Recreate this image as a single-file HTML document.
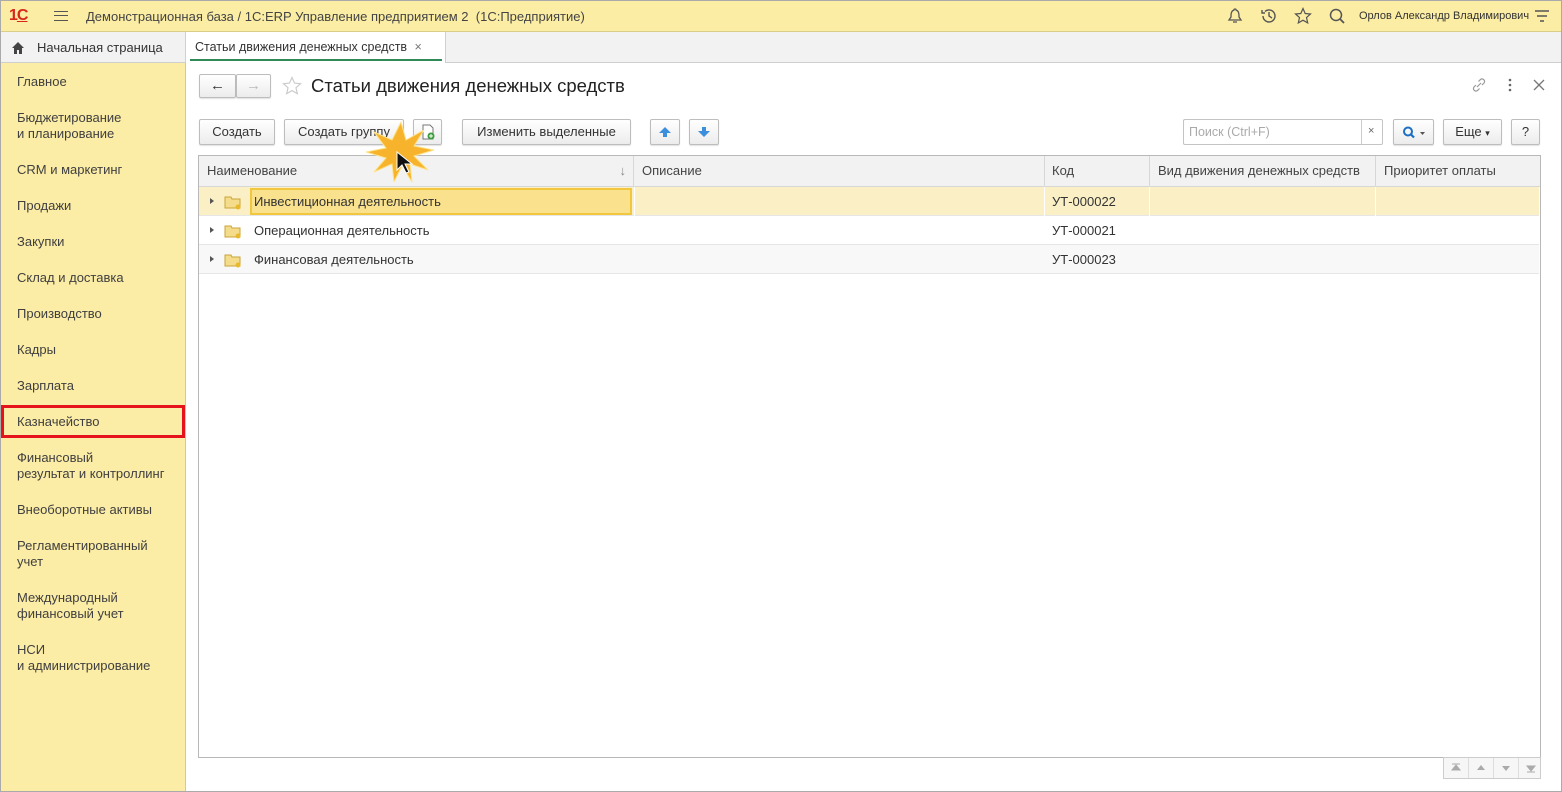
<!DOCTYPE html><html><head><meta charset="utf-8"><style>
*{box-sizing:border-box;margin:0;padding:0}
body{width:1562px;height:792px;overflow:hidden;font-family:"Liberation Sans",sans-serif;font-size:13px;color:#333;background:#fff;position:relative}
.a{position:absolute}
.btn{position:absolute;height:26px;border:1px solid #bdbdbd;border-radius:2px;background:linear-gradient(#fff,#ececec);box-shadow:0 1px 1px rgba(0,0,0,.12);text-align:center;line-height:24px;color:#333}
.side div{position:absolute;left:17px;line-height:16px;color:#404040}
.th{position:absolute;top:156px;height:30px;line-height:30px;padding-left:8px;border-right:1px solid #d7d7d7;color:#444}
.row{position:absolute;left:199px;width:1340px;height:29px;border-bottom:1px solid #e6e6e6;line-height:28px}
.tri{position:absolute;left:210px;width:0;height:0;border-left:4px solid #555;border-top:3.5px solid transparent;border-bottom:3.5px solid transparent}
</style></head><body>
<div class="a" style="left:0;top:0;width:1562px;height:32px;background:#fbeda4;border-bottom:1px solid #d9cd8a"></div>
<div class="a" style="left:9px;top:7px;color:#d7261c;font-weight:bold;font-size:16px;letter-spacing:-1px">1<span style="text-decoration:underline">С</span></div>
<div class="a" style="left:54px;top:11px;width:14px;height:10px;border-top:1.5px solid #555;border-bottom:1.5px solid #555"><div style="margin-top:3px;border-top:1.5px solid #555"></div></div>
<div class="a" style="left:86px;top:9px;color:#444">Демонстрационная база / 1С:ERP Управление предприятием 2&nbsp; (1С:Предприятие)</div>
<svg class="a" style="left:1226px;top:7px" width="18" height="18"><path d="M9 2a1 1 0 0 1 1 1c3 1 3 4 3 7l2 3H3l2-3c0-3 0-6 3-7a1 1 0 0 1 1-1zM7 15h4" fill="none" stroke="#555" stroke-width="1.3"/></svg>
<svg class="a" style="left:1260px;top:7px" width="18" height="18"><path d="M3 9a6 6 0 1 0 2-4.5M2 3v3h3M9 5v4l3 2" fill="none" stroke="#555" stroke-width="1.4"/></svg>
<svg class="a" style="left:1294px;top:7px" width="18" height="18"><path d="M9 1.5l2.2 5 5.3.5-4 3.6 1.2 5.3L9 13.2 4.3 15.9l1.2-5.3-4-3.6 5.3-.5z" fill="none" stroke="#555" stroke-width="1.2"/></svg>
<svg class="a" style="left:1329px;top:8px" width="17" height="17"><circle cx="7" cy="7" r="5.5" fill="none" stroke="#555" stroke-width="1.5"/><path d="M11 11l4 4" stroke="#555" stroke-width="1.8"/></svg>
<div class="a" style="left:1359px;top:10px;font-size:11px;color:#333">Орлов Александр Владимирович</div>
<svg class="a" style="left:1534px;top:9px" width="16" height="14"><path d="M1 2h14M3 7h10M6 12h4" stroke="#555" stroke-width="1.5"/></svg>
<div class="a" style="left:0;top:32px;width:1562px;height:31px;background:#f2f2f2;border-bottom:1px solid #cfcfcf"></div>
<svg class="a" style="left:11px;top:41px" width="14" height="13"><path d="M7 1L1 7h2v6h3V9h2v4h3V7h2z" fill="#444"/></svg>
<div class="a" style="left:37px;top:40px;color:#333">Начальная страница</div>
<div class="a" style="left:185px;top:32px;width:1px;height:31px;background:#d0d0d0"></div>
<div class="a" style="left:186px;top:32px;width:260px;height:31px;background:#fff;border-right:1px solid #d0d0d0"></div>
<div class="a" style="left:195px;top:40px;font-size:12.5px;color:#333">Статьи движения денежных средств <span style="color:#777;margin-left:4px">×</span></div>
<div class="a" style="left:190px;top:59px;width:252px;height:2px;background:#2e8b57"></div>
<div class="a" style="left:0;top:63px;width:186px;height:729px;background:#fbeca6;border-right:1px solid #d6ca8c"></div>
<div class="side">
<div style="top:74px">Главное</div>
<div style="top:110px">Бюджетирование<br>и планирование</div>
<div style="top:162px">CRM и маркетинг</div>
<div style="top:198px">Продажи</div>
<div style="top:234px">Закупки</div>
<div style="top:270px">Склад и доставка</div>
<div style="top:306px">Производство</div>
<div style="top:342px">Кадры</div>
<div style="top:378px">Зарплата</div>
<div style="top:414px">Казначейство</div>
<div style="top:450px">Финансовый<br>результат и контроллинг</div>
<div style="top:502px">Внеоборотные активы</div>
<div style="top:538px">Регламентированный<br>учет</div>
<div style="top:590px">Международный<br>финансовый учет</div>
<div style="top:642px">НСИ<br>и администрирование</div>
</div>
<div class="a" style="left:1px;top:405px;width:184px;height:33px;border:3px solid #e5131b"></div>
<div class="a" style="left:0;top:0;width:1562px;height:792px;border:1px solid #aaa;pointer-events:none"></div>
<div class="btn" style="left:199px;top:74px;width:37px;height:24px;line-height:22px;font-size:15px">←</div>
<div class="btn" style="left:236px;top:74px;width:35px;height:24px;line-height:22px;font-size:15px;color:#bbb">→</div>
<svg class="a" style="left:282px;top:76px" width="20" height="20"><path d="M10 1.5l2.5 5.6 6 .6-4.5 4 1.3 6L10 14.6 4.7 17.7l1.3-6-4.5-4 6-.6z" fill="none" stroke="#ccc" stroke-width="1.2"/></svg>
<div class="a" style="left:311px;top:75px;font-size:18.5px;color:#222">Статьи движения денежных средств</div>
<svg class="a" style="left:1471px;top:77px" width="16" height="16"><path d="M6 10l4-4M5 8l-2 2a2.5 2.5 0 0 0 3.5 3.5l2-2M11 8l2-2a2.5 2.5 0 0 0-3.5-3.5l-2 2" stroke="#999" stroke-width="1.2" fill="none"/></svg>
<svg class="a" style="left:1507px;top:78px" width="6" height="14"><circle cx="3" cy="2" r="1.3" fill="#666"/><circle cx="3" cy="7" r="1.3" fill="#666"/><circle cx="3" cy="12" r="1.3" fill="#666"/></svg>
<svg class="a" style="left:1533px;top:79px" width="12" height="12"><path d="M1 1l10 10M11 1L1 11" stroke="#777" stroke-width="1.3"/></svg>
<div class="btn" style="left:199px;top:119px;width:76px">Создать</div>
<div class="btn" style="left:284px;top:119px;width:120px">Создать группу</div>
<div class="btn" style="left:413px;top:119px;width:29px"><svg width="14" height="16" style="margin-top:4px"><path d="M2 1h7l3 3v11H2z" fill="#fff" stroke="#777"/><circle cx="10" cy="12" r="3.5" fill="#3a9d3a"/><path d="M10 10v4M8 12h4" stroke="#fff"/></svg></div>
<div class="btn" style="left:462px;top:119px;width:169px">Изменить выделенные</div>
<div class="btn" style="left:650px;top:119px;width:30px"><svg width="14" height="12" style="margin-top:6px"><path d="M7 1l6 6H9v4H5V7H1z" fill="#3b8fdc"/></svg></div>
<div class="btn" style="left:689px;top:119px;width:30px"><svg width="14" height="12" style="margin-top:6px"><path d="M7 11l6-6H9V1H5v4H1z" fill="#3b8fdc"/></svg></div>
<div class="a" style="left:1183px;top:119px;width:200px;height:26px;border:1px solid #c4c4c4;border-radius:2px;background:#fff"></div>
<div class="a" style="left:1189px;top:125px;color:#aaa;font-size:12.5px">Поиск (Ctrl+F)</div>
<div class="a" style="left:1361px;top:120px;width:1px;height:24px;background:#ccc"></div>
<div class="a" style="left:1368px;top:125px;color:#666;font-size:11px">×</div>
<div class="btn" style="left:1393px;top:119px;width:41px"><svg width="24" height="14" style="margin-top:6px"><circle cx="6" cy="5.5" r="4" fill="none" stroke="#1d6fc4" stroke-width="2"/><path d="M9 8.5l3 3" stroke="#1d6fc4" stroke-width="2.2"/><path d="M18 6h5l-2.5 3z" fill="#555"/></svg></div>
<div class="btn" style="left:1443px;top:119px;width:59px">Еще <span style="font-size:9px">▾</span></div>
<div class="btn" style="left:1511px;top:119px;width:29px">?</div>
<div class="a" style="left:198px;top:155px;width:1343px;height:603px;border:1px solid #b8b8b8"></div>
<div class="a" style="left:199px;top:156px;width:1341px;height:31px;background:#f2f2f2;border-bottom:1px solid #d7d7d7"></div>
<div class="th" style="left:199px;width:435px">Наименование<span style="position:absolute;right:7px;color:#888">↓</span></div>
<div class="th" style="left:634px;width:411px">Описание</div>
<div class="th" style="left:1044px;width:106px">Код</div>
<div class="th" style="left:1150px;width:226px">Вид движения денежных средств</div>
<div class="th" style="left:1376px;width:164px;border-right:0">Приоритет оплаты</div>
<div class="row" style="top:187px;background:#fbf0c5"><div class="a" style="left:51px;top:1px;width:382px;height:27px;background:#f9e18d;border:2px solid #f2c740"></div><div class="a" style="left:950px;top:0;width:1px;height:29px;background:#fff"></div><div class="a" style="left:1176px;top:0;width:1px;height:29px;background:#fff"></div><div class="a" style="left:435px;top:0;width:1px;height:29px;background:#fff"></div><div class="a" style="left:845px;top:0;width:1px;height:29px;background:#fff"></div></div>
<div class="row" style="top:216px"></div>
<div class="row" style="top:245px;background:#f8f8f8"></div>
<div class="tri" style="top:198px"></div>
<div class="tri" style="top:227px"></div>
<div class="tri" style="top:256px"></div>
<svg class="a" style="left:224px;top:194px" width="18" height="16"><path d="M1 3h6l1 2h8v9H1z" fill="#f5dc8a" stroke="#c9a33a"/><circle cx="14" cy="13" r="2.5" fill="#e8b92a"/></svg>
<svg class="a" style="left:224px;top:223px" width="18" height="16"><path d="M1 3h6l1 2h8v9H1z" fill="#f5dc8a" stroke="#c9a33a"/><circle cx="14" cy="13" r="2.5" fill="#e8b92a"/></svg>
<svg class="a" style="left:224px;top:252px" width="18" height="16"><path d="M1 3h6l1 2h8v9H1z" fill="#f5dc8a" stroke="#c9a33a"/><circle cx="14" cy="13" r="2.5" fill="#e8b92a"/></svg>
<div class="a" style="left:254px;top:194px">Инвестиционная деятельность</div>
<div class="a" style="left:254px;top:223px">Операционная деятельность</div>
<div class="a" style="left:254px;top:252px">Финансовая деятельность</div>
<div class="a" style="left:1052px;top:194px">УТ-000022</div>
<div class="a" style="left:1052px;top:223px">УТ-000021</div>
<div class="a" style="left:1052px;top:252px">УТ-000023</div>
<svg class="a" style="left:366px;top:120px" width="70" height="62"><path d="M35 2l5 18 18-10-10 16 20 4-20 6 14 14-18-6 2 18-10-16-8 16-2-18-18 8 12-14-20-6 20-4-12-16 18 8z" fill="#f7b32b" stroke="#fde38a"/><path d="M31 32l0 18 5-5 4 8 3-1-4-8 7 0z" fill="#111" stroke="#fff"/></svg>
<div class="a" style="left:1443px;top:757px;width:98px;height:22px;border:1px solid #ccc;background:#f6f6f6;display:flex">
<div style="flex:1;border-right:1px solid #ddd"><svg width="24" height="20"><path d="M8 6h8M12 7l-4 5h8z" stroke="#aaa" fill="#aaa"/></svg></div>
<div style="flex:1;border-right:1px solid #ddd"><svg width="24" height="20"><path d="M12 7l-4 5h8z" fill="#aaa"/></svg></div>
<div style="flex:1;border-right:1px solid #ddd"><svg width="24" height="20"><path d="M12 13l-4-5h8z" fill="#aaa"/></svg></div>
<div style="flex:1"><svg width="24" height="20"><path d="M8 14h8M12 13l-4-5h8z" stroke="#aaa" fill="#aaa"/></svg></div></div>
</body></html>
